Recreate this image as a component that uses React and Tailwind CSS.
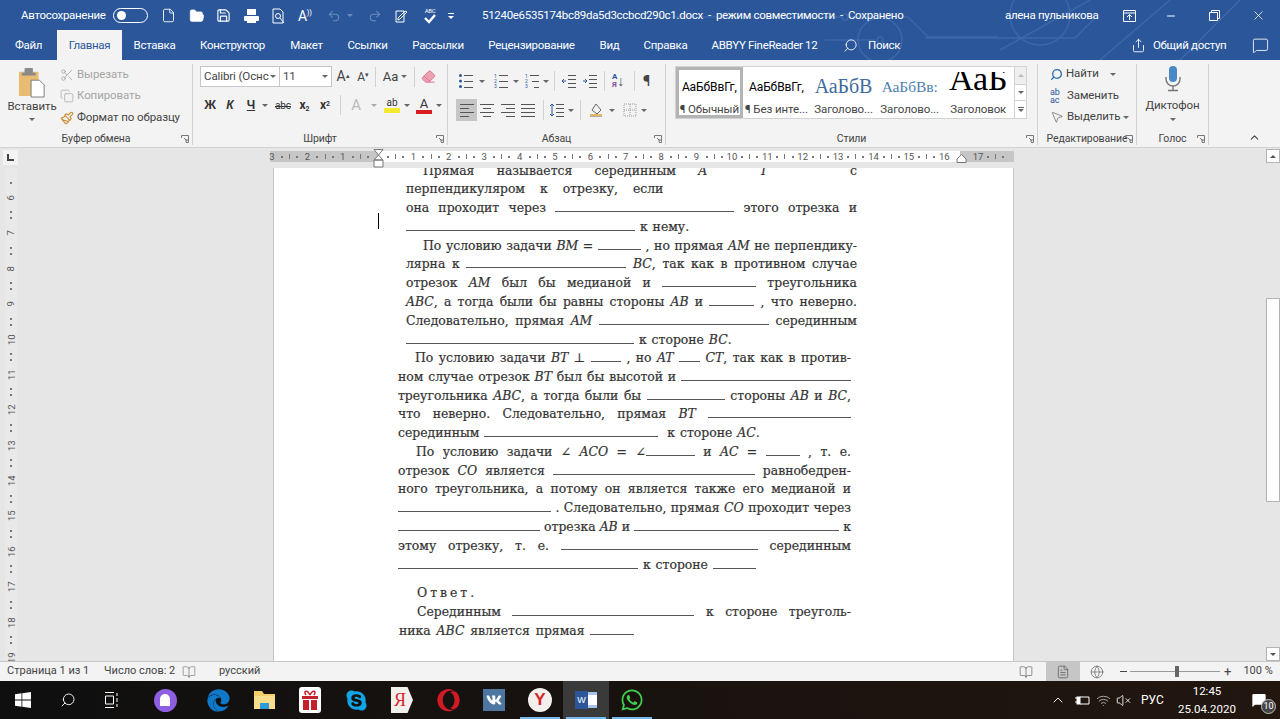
import { ChevronUp, Copy, File, FolderOpen, MessageSquare, MousePointer2, Paintbrush, Redo2, Save, Scissors, Search, Share, Undo2, X, Minus, BookOpen, FileText, Globe, Wifi, VolumeX, Eraser } from 'lucide-react';
import { FaEdge, FaOpera, FaSkype, FaVk, FaWhatsapp } from 'react-icons/fa';

const Caret = ({ className = 'border-t-[#666]' }) => (
  <span className={`inline-block w-0 h-0 border-x-[3px] border-x-transparent border-t-[3px] ${className}`} />
);

const Launcher = () => (
  <svg width="8" height="8" viewBox="0 0 8 8" className="absolute right-[3px] bottom-[2px] text-[#777]" fill="none" stroke="currentColor">
    <path d="M.5 3V.5H7.5V7.5H5M3 3l3 3M6 4v2H4" />
  </svg>
);

const Group = ({ w, label, children }) => (
  <div className={`relative flex flex-col my-[4px] border-r border-[#d2d2d2] h-[81px] ${w}`}>
    <div className="flex-1 min-h-0">{children}</div>
    <div className="h-[14px] leading-[16px] text-center text-[10.500px] text-[#444] whitespace-nowrap">{label}</div>
    <Launcher />
  </div>
);

const Sep = ({ className = '' }) => <span className={`w-px h-[20px] bg-[#d2d2d2] ${className}`} />;

// small "text lines" icons for the paragraph group
const Lines = ({ rows, marks, color = '#555' }) => (
  <svg width="16" height="14" viewBox="0 0 16 14" fill="none" stroke={color}>
    {rows.map(([a, b], i) => (
      <path key={i} d={`M${a} ${i * (12 / (rows.length - 1)) + 1.5}H${b}`} />
    ))}
    {marks}
  </svg>
);

const alignLeft = [[1, 15], [1, 10], [1, 15], [1, 10]];
const alignCenter = [[1, 15], [4, 12], [1, 15], [4, 12]];
const alignRight = [[1, 15], [6, 15], [1, 15], [6, 15]];
const alignFull = [[1, 15], [1, 15], [1, 15], [1, 15]];
const listRows = [[6, 15], [6, 15], [6, 15]];

const bullets = (
  <g fill="#2b579a" stroke="none"><circle cx="2.5" cy="1.5" r="1.5" /><circle cx="2.5" cy="7" r="1.5" /><circle cx="2.5" cy="12.500" r="1.5" /></g>
);
const numbers = (
  <g fill="#2b579a" stroke="none" fontSize="5" fontFamily="Roboto, sans-serif"><text x="1" y="4">1</text><text x="1" y="9">2</text><text x="1" y="14">3</text></g>
);

const ClipboardIcon = () => (
  <svg width="28" height="32" viewBox="0 0 30 34" className="block">
    <rect x="1" y="5" width="21" height="26" rx="1" fill="#e8bd72" />
    <rect x="7" y="1" width="9" height="7" rx="1" fill="#8a8a8a" />
    <rect x="4" y="6" width="15" height="3" fill="#8a8a8a" />
    <path d="M14 14h9l5 5v13H14z" fill="#fff" stroke="#777" />
  </svg>
);

const MicIcon = () => (
  <svg width="18" height="27" viewBox="0 0 18 27" className="block" fill="none">
    <rect x="5" y="1" width="8" height="16" rx="4" fill="#4a8ac4" />
    <path d="M2 12v2a7 7 0 0 0 14 0v-2M9 21v4M4 25.500h10" stroke="#777" strokeWidth="1.4" />
  </svg>
);

const tabs = [
  ['Файл', 'w-[57px]'], ['Главная', 'w-[65px]'], ['Вставка', 'w-[65px]'], ['Конструктор', 'w-[91px]'],
  ['Макет', 'w-[57px]'], ['Ссылки', 'w-[65px]'], ['Рассылки', 'w-[76px]'], ['Рецензирование', 'w-[111px]'],
  ['Вид', 'w-[45px]'], ['Справка', 'w-[67px]'], ['ABBYY FineReader 12', 'w-[131px]'],
];

const Header = () => (
  <div className="relative h-[60px] bg-[#2b579a] text-white text-[11.500px] tracking-[-0.3px] shrink-0">
    <svg className="absolute inset-0 pointer-events-none" width="1280" height="60" fill="none" stroke="#3c67a8" strokeWidth="1.5">
      <circle cx="845" cy="17" r="3" /><circle cx="880" cy="40" r="22" /><circle cx="1040" cy="15" r="30" />
      <path d="M650 17H842M848 17h60l20 20h70M875 40h-50M1000 50l90-50M1100 60l70-60M1180 60l60-60M925 38h150l20-20" />
      <circle cx="880" cy="40" r="3" />
    </svg>
    <div className="relative flex items-center h-[30px] pl-[21px] pt-px">
      <span className="w-[92px]">Автосохранение</span>
      <span className="flex items-center w-[35px] h-[15px] px-[3px] rounded-full border border-white"><span className="w-[9px] h-[9px] rounded-full bg-white" /></span>
      <File size={15} strokeWidth={1.4} className="ml-[13px]" />
      <FolderOpen size={16} fill="#fff" strokeWidth={1.2} className="ml-[13px]" />
      <Save size={15} strokeWidth={1.8} className="ml-[11px]" />
      <svg width="17" height="16" viewBox="0 0 17 16" className="ml-[12px]" fill="#fff"><rect x="1" y="8" width="15" height="5" rx="1" /><rect x="4" y="1" width="9" height="6" /><rect x="4" y="12" width="9" height="3" /></svg>
      <svg width="15" height="16" viewBox="0 0 15 16" className="ml-[11px]" fill="none" stroke="#fff"><path d="M2 1h7l3 3v11H2z" /><circle cx="7" cy="8" r="2.5" /><path d="M9 10l4 5" /></svg>
      <span className="ml-[12px] w-[18px] text-[14px] leading-none">A<span className="text-[8px] align-top">))</span></span>
      <Undo2 size={14} strokeWidth={1.8} className="ml-[11px] text-[#6b8cbd]" />
      <Caret className="border-t-[#6b8cbd] ml-[6px]" />
      <Redo2 size={14} strokeWidth={1.8} className="ml-[15px] text-[#6b8cbd]" />
      <svg width="14" height="14" viewBox="0 0 14 14" className="ml-[13px]" fill="none" stroke="#fff"><path d="M1 2h8v11H1zM3 9l7-7 2 1-7 7-2 1z" /></svg>
      <span className="ml-[13px] w-[16px] h-[18px] flex flex-col items-center"><span className="text-[6px] leading-[7px]">ABC</span><svg width="14" height="10" viewBox="0 0 14 10" fill="none" stroke="#fff" strokeWidth="2.4"><path d="M2 4l4 4 6-7" /></svg></span>
      <span className="ml-[10px] flex flex-col items-center gap-[2px]"><span className="w-[6px] h-px bg-white" /><Caret className="border-t-white" /></span>
      <span className="ml-[28px] w-[523px] whitespace-pre">51240e6535174bc89da5d3ccbcd290c1.docx  -  режим совместимости  -  Сохранено</span>
      <span className="w-[118px]">алена пульникова</span>
      <svg width="13" height="12" viewBox="0 0 13 12" fill="none" stroke="#fff"><path d="M.5.5h12v11H.5zM.5 3h12M6.500 10V5M4 7l2.500-2.500L9 7" /></svg>
      <Minus size={12} className="ml-[29px]" />
      <svg width="11" height="11" viewBox="0 0 11 11" fill="none" stroke="#fff" className="ml-[32px]"><path d="M.5 2.500h8v8h-8zM2.500 2.500v-2h8v8h-2" /></svg>
      <X size={15} strokeWidth={1.2} className="ml-[31px]" />
    </div>
    <div className="relative flex items-center h-[30px]">
      {tabs.map(([name, w]) => (
        <span key={name} className={`${w} h-full pt-px flex items-center justify-center whitespace-nowrap ${name === 'Главная' ? 'bg-[#f3f3f3] text-[#2b579a]' : ''}`}>{name}</span>
      ))}
      <Search size={15} strokeWidth={1.4} className="ml-[13px] -scale-x-100" />
      <span className="ml-[10px] w-[263px] pt-px">Поиск</span>
      <Share size={15} strokeWidth={1.4} />
      <span className="ml-[7px] w-[99px] pt-px whitespace-nowrap">Общий доступ</span>
      <MessageSquare size={17} strokeWidth={1.2} />
    </div>
  </div>
);

const Ribbon = () => (
  <div className="flex h-[88px] shrink-0 bg-[#f3f3f3] border-b border-[#d2d2d2] text-[11.500px] tracking-[-0.1px] text-[#444]">
    <Group w="w-[193px]" label="Буфер обмена">
      <div className="flex">
        <div className="w-[64px] flex flex-col items-center pt-[3px]">
          <ClipboardIcon />
          <span className="text-[11.500px] leading-[14px]">Вставить</span>
          <span className="mt-[5px] flex"><Caret /></span>
        </div>
        <div className="flex flex-col -ml-[4px]">
          <div className="h-[21px] flex items-center gap-[3px] text-[#a6a6a6]"><Scissors size={14} strokeWidth={1.4} />Вырезать</div>
          <div className="h-[22px] flex items-center gap-[3px] text-[#a6a6a6]"><Copy size={14} strokeWidth={1.2} />Копировать</div>
          <div className="h-[21px] flex items-center gap-[3px] whitespace-nowrap"><Paintbrush size={14} strokeWidth={1.8} className="text-[#c88a2d]" />Формат по образцу</div>
        </div>
      </div>
    </Group>

    <Group w="w-[255px]" label="Шрифт">
      <div className="flex items-center pl-[7px] mt-[2px] h-[21px]">
        <span className="w-[80px] h-full flex items-center justify-between px-[3px] bg-white border border-[#c6c6c6] whitespace-nowrap">Calibri (Оснс<Caret /></span>
        <span className="w-[52px] h-full flex items-center justify-between px-[3px] bg-white border border-l-0 border-[#c6c6c6]">11<Caret /></span>
        <span className="w-[20px] ml-px text-center text-[14px]">A<sup className="text-[7px]">▴</sup></span>
        <span className="w-[20px] text-center text-[12px]">A<sup className="text-[7px]">▾</sup></span>
        <Sep className="ml-[2px]" />
        <span className="w-[38px] flex items-center justify-center gap-[3px] text-[13px]">Aa <Caret /></span>
        <Sep />
        <Eraser size={15} strokeWidth={1.5} fill="#eda2b4" className="ml-[6px] text-[#d9738c]" />
      </div>
      <div className="flex items-center pl-[7px] mt-[7px] h-[22px] text-[#333]">
        <span className="w-[20px] text-center font-bold text-[13px] font-['Liberation_Sans']">Ж</span>
        <span className="w-[20px] text-center font-bold italic text-[12px] font-['Liberation_Sans']">К</span>
        <span className="w-[22px] text-center font-bold underline text-[12px] font-['Liberation_Sans']">Ч</span>
        <span className="w-[10px] flex"><Caret /></span>
        <span className="w-[22px] text-center text-[10px] line-through">abc</span>
        <span className="w-[21px] text-center font-bold text-[12px]">x<sub className="text-[7px]">2</sub></span>
        <span className="w-[20px] text-center font-bold text-[12px]">x<sup className="text-[7px]">2</sup></span>
        <Sep className="ml-[5px]" />
        <span className="w-[30px] text-center text-[15px] text-[#bbb]">A</span>
        <span className="w-[6px] flex"><Caret className="border-t-[#aaa]" /></span>
        <span className="w-[24px] ml-[3px] flex flex-col items-center leading-none"><span className="text-[10px]">ab</span><span className="w-[16px] h-[5px] bg-[#f5e830]" /></span>
        <span className="w-[8px] flex"><Caret /></span>
        <span className="w-[24px] flex flex-col items-center leading-none"><span className="text-[13px]">A</span><span className="w-[16px] h-[4px] bg-[#d81e1e]" /></span>
        <Caret />
      </div>
    </Group>

    <Group w="w-[218px]" label="Абзац">
      <div className="flex items-center pl-[10px] mt-[7px] h-[20px]">
        <Lines rows={listRows} marks={bullets} />
        <span className="w-[14px] pl-[5px] flex"><Caret /></span>
        <span className="ml-[5px] flex"><Lines rows={listRows} marks={numbers} /></span>
        <span className="w-[12px] pl-[4px] flex"><Caret /></span>
        <span className="ml-[3px] flex"><Lines rows={[[6, 15], [8, 15], [10, 15]]} marks={numbers} /></span>
        <span className="w-[11px] pl-[3px] flex"><Caret /></span>
        <Sep className="ml-[3px]" />
        <span className="ml-[6px] flex"><Lines rows={[[7, 15], [7, 15], [7, 15], [7, 15]]} marks={<path d="M5 7H1M3 5L1 7l2 2" stroke="#2b579a" />} /></span>
        <span className="ml-[5px] flex"><Lines rows={[[7, 15], [7, 15], [7, 15], [7, 15]]} marks={<path d="M1 7h4M3 5l2 2-2 2" stroke="#2b579a" />} /></span>
        <Sep className="ml-[6px]" />
        <span className="ml-[7px] w-[16px] flex items-center leading-[8px] text-[8px] font-bold text-[#2b579a]"><span>А<br /><span className="text-[#8a4fa3]">Я</span></span><span className="text-[14px] text-[#555] font-normal">↓</span></span>
        <Sep className="ml-[6px]" />
        <span className="ml-[8px] text-[15px]">¶</span>
      </div>
      <div className="flex items-center pl-[8px] mt-[8px] h-[22px]">
        <span className="w-[21px] h-[22px] flex items-center justify-center bg-[#c6c6c6]"><Lines rows={alignLeft} /></span>
        <span className="w-[20px] flex justify-center"><Lines rows={alignCenter} /></span>
        <span className="w-[21px] flex justify-center"><Lines rows={alignRight} /></span>
        <span className="w-[20px] flex justify-center"><Lines rows={alignFull} /></span>
        <Sep className="ml-[5px]" />
        <span className="ml-[5px] flex"><Lines rows={[[7, 15], [7, 15], [7, 15], [7, 15]]} marks={<path d="M3 1v12M1 3l2-2 2 2M1 11l2 2 2-2" stroke="#2b579a" />} /></span>
        <span className="w-[12px] pl-[3px] flex"><Caret /></span>
        <Sep className="ml-[3px]" />
        <svg width="16" height="16" viewBox="0 0 16 16" className="ml-[7px]" fill="none" stroke="#666"><path d="M8 2l5 6-4 4-5-4zM2 14h12" /><path d="M2 13h12" stroke="#e6b95e" strokeWidth="2" /></svg>
        <span className="w-[12px] pl-[5px] flex"><Caret /></span>
        <svg width="14" height="14" viewBox="0 0 14 14" className="ml-[7px]" fill="none" stroke="#999" strokeDasharray="1 1"><path d="M1 1h12v12H1zM7 1v12M1 7h12" /></svg>
        <span className="w-[10px] pl-[4px] flex"><Caret /></span>
      </div>
    </Group>

    <Group w="w-[372px]" label="Стили">
      <div className="flex ml-[9px] mt-[2px] w-[352px] h-[53px] bg-white border border-[#d2d2d2] whitespace-nowrap text-[#444]">
        <div className="w-[67px] flex flex-col items-center border-[3px] border-[#b4b4b4]">
          <span className="h-[31px] leading-[34px] text-[12px] text-black">АаБбВвГг,</span>
          <span>¶ Обычный</span>
        </div>
        <div className="w-[68px] flex flex-col items-center pt-[3px]">
          <span className="h-[31px] leading-[34px] text-[12px] text-black">АаБбВвГг,</span>
          <span>¶ Без инте...</span>
        </div>
        <div className="w-[67px] flex flex-col items-center pt-[3px]">
          <span className="h-[31px] leading-[32px] text-[20px] text-[#3f6c9e] font-['Liberation_Serif']">АаБбВ</span>
          <span>Заголово...</span>
        </div>
        <div className="w-[66px] flex flex-col items-center pt-[3px]">
          <span className="h-[31px] leading-[34px] text-[15.500px] text-[#4f7fb0] font-['Liberation_Serif']">АаБбВв:</span>
          <span>Заголово...</span>
        </div>
        <div className="w-[72px] flex flex-col items-center pt-[5px]">
          <span className="h-[29px] overflow-hidden leading-[14px] text-[34px] text-black font-['Liberation_Serif']">АаБ</span>
          <span>Заголовок</span>
        </div>
        <div className="w-[12px] flex flex-col">
          <span className="h-[17px] flex items-center justify-center border-l border-[#d2d2d2] bg-[#efefef]"><Caret className="rotate-180 border-t-[#bbb]" /></span>
          <span className="h-[17px] flex items-center justify-center border-l border-y border-[#d2d2d2]"><Caret /></span>
          <span className="h-[17px] flex flex-col items-center justify-center gap-px border-l border-[#d2d2d2]"><span className="w-[6px] h-px bg-[#666]" /><Caret /></span>
        </div>
      </div>
    </Group>

    <Group w="w-[99px]" label="Редактирование">
      <div className="flex flex-col pl-[12px] -mt-[1px]">
        <div className="h-[22px] flex items-center gap-[3px]"><Search size={13} strokeWidth={2.4} className="text-[#2b6cb0] -scale-x-100" />Найти<span className="ml-[8px] flex"><Caret /></span></div>
        <div className="h-[21px] flex items-center gap-[3px]"><span className="w-[14px] text-[9px] leading-[8px] text-[#2b579a]">ab<br />ac</span>Заменить</div>
        <div className="h-[22px] flex items-center gap-[3px]"><MousePointer2 size={14} strokeWidth={1} />Выделить<Caret /></div>
      </div>
    </Group>

    <Group w="w-[72px]" label="Голос">
      <div className="flex flex-col items-center pt-[1px]">
        <MicIcon />
        <span className="text-[11.500px] leading-[14px] mt-[6px]">Диктофон</span>
        <span className="mt-[6px] flex"><Caret /></span>
      </div>
    </Group>
    <div className="flex-1 flex items-end justify-end pr-[19px] pb-[3px]"><ChevronUp size={13} /></div>
  </div>
);

const Dots = () => (
  <span className="flex-1 flex items-center justify-around px-[6px]">
    <span className="w-[2px] h-[2px] bg-[#777]" />
    <span className="w-px h-[5px] bg-[#777]" />
    <span className="w-[2px] h-[2px] bg-[#777]" />
  </span>
);

// number sits on the cell edge, so that it falls on the whole centimetre
const Num = ({ n }) => <span className="w-0 flex justify-center">{n}</span>;

const HCell = ({ n, after }) => (
  <span className="w-[35.400px] shrink-0 flex items-center">
    {!after && <Num n={n} />}
    <Dots />
    {after && <Num n={n} />}
  </span>
);

const HRuler = () => (
  <div className="relative flex ml-[250px] mt-[3px] w-[744px] h-[11px] text-[9.500px] leading-[11px] text-[#555]">
    <div className="w-[108px] bg-[#c6c6c6] flex pl-[2px]">
      {[3, 2, 1].map((n) => <HCell key={n} n={n} />)}
    </div>
    <div className="w-[582px] bg-white flex">
      {Array.from({ length: 16 }, (_, i) => <HCell key={i} n={i + 1} after />)}
    </div>
    <div className="w-[54px] bg-[#c6c6c6] flex pl-[18px]">
      <HCell n={17} />
    </div>
    {/* indent markers */}
    <svg className="absolute left-[103px] -top-[2px]" width="11" height="19" viewBox="0 0 11 19" fill="#fff" stroke="#777">
      <path d="M1 .5h9L5.500 6zM5.500 6l4.500 5H1zM1 11h9v7H1z" />
    </svg>
    <svg className="absolute left-[686px] top-[3px]" width="11" height="9" viewBox="0 0 11 9" fill="#fff" stroke="#777">
      <path d="M5.500.5L10 5v3.500H1V5z" />
    </svg>
  </div>
);

const VRuler = () => (
  <div className="w-[20px] shrink-0 flex flex-col items-center">
    <div className="mt-[2px] w-[15px] h-[15px] bg-[#f3f3f3] flex items-center justify-center">
      <span className="w-[7px] h-[7px] border-l-2 border-b-2 border-[#444]" />
    </div>
    <div className="mt-[3px] w-[12px] ml-[2px] flex-1 min-h-0 bg-[#e9e9e9] text-[9.500px] text-[#555] pt-[12px] overflow-hidden">
      {[6, 7, 8, 9, 10, 11, 12, 13, 14, 15, 16, 17, 18, 19].map((n) => (
        <div key={n} className="h-[35.400px] flex flex-col items-center justify-between py-[2px]">
          <span className="w-[2px] h-[2px] bg-[#777]" />
          <span className="leading-none -rotate-90">{n}</span>
          <span className="w-[2px] h-[2px] bg-[#777]" />
        </div>
      ))}
    </div>
  </div>
);

const B = ({ w }) => <span className="inline-block align-baseline border-b border-[#555]" style={{ width: w }} />;
const I = ({ children }) => <i>{children}</i>;

const L = ({ children, indent, left }) => (
  <p className={`h-[18.780px] leading-[18.780px] ${left ? 'text-left' : 'text-justify [text-align-last:justify]'} ${indent || ''}`}>{children}</p>
);

const Doc = () => (
  <div className="relative ml-[253px] w-[741px] flex-1 min-h-0 overflow-hidden bg-white border-x border-[#c6c6c6] text-[12.400px] tracking-normal font-['DejaVu_Serif',serif] text-[#333] [-webkit-text-stroke:0.2px_#333]">
    <span className="absolute left-[104px] top-[45px] w-px h-[16px] bg-black" />
    <div className="w-[451px] ml-[132px] -mt-[6.400px]">
      <L indent="pl-[17px]">Прямая называется серединным <I>A</I> <span className="ml-[30px]"><I>T</I></span> <span className="ml-[60px]">с</span></L>
      <L left indent="[word-spacing:11px]">перпендикуляром к отрезку, если</L>
      <L>она проходит через <B w={179} /> этого отрезка и</L>
      <L left indent="[word-spacing:1px]"><B w={229} /> к нему.</L>
      <L indent="pl-[17px]">По условию задачи <I>BM</I> = <B w={43} /> , но прямая <I>AM</I> не перпендику-</L>
      <L>лярна к <B w={160} /> <I>BC</I>, так как в противном случае</L>
      <L>отрезок <I>AM</I> был бы медианой и <B w={94} /> треугольника</L>
      <L><I>ABC</I>, а тогда были бы равны стороны <I>AB</I> и <B w={45} /> , что неверно.</L>
      <L>Следовательно, прямая <I>AM</I> <B w={170} /> серединным</L>
      <L left indent="[word-spacing:1px]"><B w={228} /> к стороне <I>BC</I>.</L>
    </div>
    <div className="w-[453px] ml-[124px] -mt-[0.200px]">
      <L indent="pl-[17px]">По условию задачи <I>BT</I> ⊥ <B w={30} /> , но <I>AT</I> <B w={21} /> <I>CT</I>, так как в против-</L>
      <L>ном случае отрезок <I>BT</I> был бы высотой и <B w={170} /></L>
      <L>треугольника <I>ABC</I>, а тогда были бы <B w={78} /> стороны <I>AB</I> и <I>BC</I>,</L>
      <L>что неверно. Следовательно, прямая <I>BT</I> <B w={143} /></L>
      <L left indent="[word-spacing:1px]">серединным <B w={174} /> <span className="ml-[4px]">к стороне <I>AC</I>.</span></L>
      <L indent="pl-[18px]">По условию задачи ∠ <I>ACO</I> = ∠<B w={49} /> и <I>AC</I> = <B w={34} /> , т. е.</L>
      <L>отрезок <I>CO</I> является <B w={202} /> равнобедрен-</L>
      <L>ного треугольника, а потому он является также его медианой и</L>
      <L><B w={153} /> . Следовательно, прямая <I>CO</I> проходит через</L>
      <L><B w={142} /> отрезка <I>AB</I> и <B w={205} /> к</L>
      <L>этому отрезку, т. е. <B w={197} /> серединным</L>
      <L left indent="[word-spacing:1px]"><B w={240} /> к стороне <B w={43} /></L>
      <div className="h-[10px]" />
      <L left indent="pl-[19px] tracking-[3px]">Ответ.</L>
      <L indent="pl-[19px]">Серединным <B w={182} /> к стороне треуголь-</L>
      <L left indent="[word-spacing:2px] pl-px">ника <I>ABC</I> является прямая <B w={44} /></L>
    </div>
  </div>
);

const ScrollBar = () => (
  <div className="w-[15px] shrink-0 bg-[#e6e6e6] flex flex-col items-center pt-[1px]">
    <span className="w-[14px] h-[14px] bg-white border border-[#b4b4b4] flex items-center justify-center"><Caret className="rotate-180 border-t-[#555]" /></span>
    <div className="flex-1 w-[14px] pt-[135px] pb-[145px]">
      <div className="h-full bg-white border border-[#b4b4b4]" />
    </div>
    <span className="w-[14px] h-[14px] bg-white border border-[#b4b4b4] flex items-center justify-center"><Caret className="border-t-[#555]" /></span>
  </div>
);

const StatusBar = () => (
  <div className="h-[20px] shrink-0 flex items-center bg-[#f3f3f3] border-t border-[#c6c6c6] pl-[7px] text-[11px] text-[#444] whitespace-nowrap">
    <span className="w-[97px]">Страница 1 из 1</span>
    <span className="w-[78px]">Число слов: 2</span>
    <BookOpen size={14} strokeWidth={1} className="text-[#666]" />
    <span className="ml-[23px] w-[800px]">русский</span>
    <BookOpen size={14} strokeWidth={1.2} className="text-[#666]" />
    <span className="ml-[13px] w-[34px] h-[19px] bg-[#c6c6c6] flex items-center justify-center"><FileText size={14} strokeWidth={1.2} className="text-[#555]" /></span>
    <Globe size={14} strokeWidth={1.2} className="ml-[10px] text-[#666]" />
    <span className="ml-[16px] w-[7px] h-px bg-[#444]" />
    <div className="relative ml-[3px] w-[90px] h-px bg-[#999]">
      <span className="absolute left-[45px] -top-[5px] w-[4px] h-[11px] bg-[#666]" />
    </div>
    <span className="ml-[4px] text-[13px] leading-none">+</span>
    <span className="ml-[12px]">100 %</span>
  </div>
);

const TaskIcon = ({ w, active, under, children }) => (
  <span className={`relative flex items-center justify-center h-full ${w} ${active ? 'bg-[#3a3a3a]' : ''}`}>
    {children}
    {under && <span className="absolute bottom-0 inset-x-[3px] h-[2px] bg-[#76b9ed]" />}
  </span>
);

const Taskbar = () => (
  <div className="h-[38px] shrink-0 flex items-center bg-gradient-to-r from-[#0f0f0f] to-[#22160f] text-white">
    <TaskIcon w="w-[46px]"><svg width="16" height="16" viewBox="0 0 16 16" fill="#fff"><path d="M0 2.200l6.500-.9v6.300H0zM7.300 1.200L16 0v7.600H7.300zM0 8.400h6.500v6.300L0 13.800zM7.300 8.400H16V16l-8.700-1.200z" /></svg></TaskIcon>
    <TaskIcon w="w-[44px]"><Search size={16} strokeWidth={1.4} className="-scale-x-100" /></TaskIcon>
    <TaskIcon w="w-[44px]"><svg width="16" height="16" viewBox="0 0 16 16" fill="none" stroke="#fff"><path d="M1 .5h9M1 15.500h9M1.500 4h8v8h-8zM13 1v3M13 6v4M13 12v3" /></svg></TaskIcon>
    <TaskIcon w="w-[62px]"><span className="w-[23px] h-[23px] rounded-full bg-[#8e5fe0] flex items-center justify-center"><span className="w-[10px] h-[12px] rounded-t-full rounded-b-[5px] bg-white" /></span></TaskIcon>
    <TaskIcon w="w-[45px]"><FaEdge size={23} className="text-[#0f78c8]" /></TaskIcon>
    <TaskIcon w="w-[46px]"><svg width="21" height="20" viewBox="0 0 21 20"><path d="M0 1h8l2 3h11v15H0z" fill="#f2cf6b" /><rect x="0" y="6" width="21" height="13" fill="#f7dd8c" /><rect x="6" y="13" width="9" height="6" fill="#2e9bd8" /></svg></TaskIcon>
    <TaskIcon w="w-[46px]"><svg width="22" height="26" viewBox="0 0 22 26"><rect width="22" height="26" rx="3" fill="#fff" /><path d="M3 9h16v3H3zM4 13h6v10H4zM12 13h6v10h-6z" fill="#c4202c" /><path d="M11 8C8 2 4 4 7 8M11 8c3-6 7-4 4 0" fill="none" stroke="#c4202c" strokeWidth="1.500" /></svg></TaskIcon>
    <TaskIcon w="w-[46px]"><FaSkype size={23} className="text-[#12a5e6]" /></TaskIcon>
    <TaskIcon w="w-[46px]"><span className="w-[22px] h-[26px] bg-[#f1efec] [clip-path:polygon(0_0,75%_0,100%_50%,75%_100%,0_100%)] text-[#d8252a] text-[18px] font-['Liberation_Serif'] leading-[26px] pl-[3px]">Я</span></TaskIcon>
    <TaskIcon w="w-[46px]"><FaOpera size={23} className="text-[#d21a26]" /></TaskIcon>
    <TaskIcon w="w-[46px]"><span className="w-[22px] h-[22px] bg-[#4d76a1] flex items-center justify-center"><FaVk size={16} className="text-white" /></span></TaskIcon>
    <TaskIcon w="w-[46px]" under><span className="w-[24px] h-[24px] rounded-full bg-[#f2efec] flex items-center justify-center text-[#d8252a] font-bold text-[17px] font-['Liberation_Sans']">Y</span></TaskIcon>
    <TaskIcon w="w-[46px]" active under><span className="w-[22px] h-[20px] flex items-center"><span className="w-[13px] h-[18px] bg-[#2b579a] text-[9px] leading-[18px] text-center font-['Liberation_Sans']">W</span><span className="w-[9px] h-[16px] bg-white border-y-[3px] border-[#a9c3e6]" /></span></TaskIcon>
    <TaskIcon w="w-[46px]" under><FaWhatsapp size={24} className="text-[#3fd14d]" /></TaskIcon>
    <span className="w-[395px]" />
    <ChevronUp size={16} strokeWidth={1.4} />
    <svg width="15" height="11" viewBox="0 0 15 11" className="ml-[9px]" fill="none" stroke="#fff"><path d="M5 2h9v7H5M0 3h3M0 7h3" /><rect x="2" y="2" width="3" height="7" fill="#fff" /></svg>
    <Wifi size={15} strokeWidth={1.4} className="ml-[6px] text-[#bbb]" />
    <VolumeX size={15} strokeWidth={1.4} className="ml-[5px]" />
    <span className="ml-[10px] w-[24px] text-[12px]">РУС</span>
    <span className="ml-[14px] w-[56px] flex flex-col items-center text-[11.500px] leading-[18px] whitespace-nowrap"><span>12:45</span><span>25.04.2020</span></span>
    <span className="relative ml-[16px]">
      <MessageSquare size={16} fill="#fff" strokeWidth={0} />
      <span className="absolute -right-[9px] -bottom-[6px] w-[15px] h-[15px] rounded-full bg-[#444] border border-[#bbb] text-[9px] leading-[13px] text-center">10</span>
    </span>
  </div>
);

export default function App() {
  return (
    <div className="w-[1280px] h-[719px] flex flex-col overflow-hidden font-['Roboto',sans-serif] bg-[#e6e6e6]">
      <Header />
      <Ribbon />
      <div className="flex flex-1 min-h-0">
        <VRuler />
        <div className="flex-1 min-w-0 flex flex-col">
          <div className="h-[20px] shrink-0"><HRuler /></div>
          <Doc />
        </div>
        <ScrollBar />
      </div>
      <StatusBar />
      <Taskbar />
    </div>
  );
}
